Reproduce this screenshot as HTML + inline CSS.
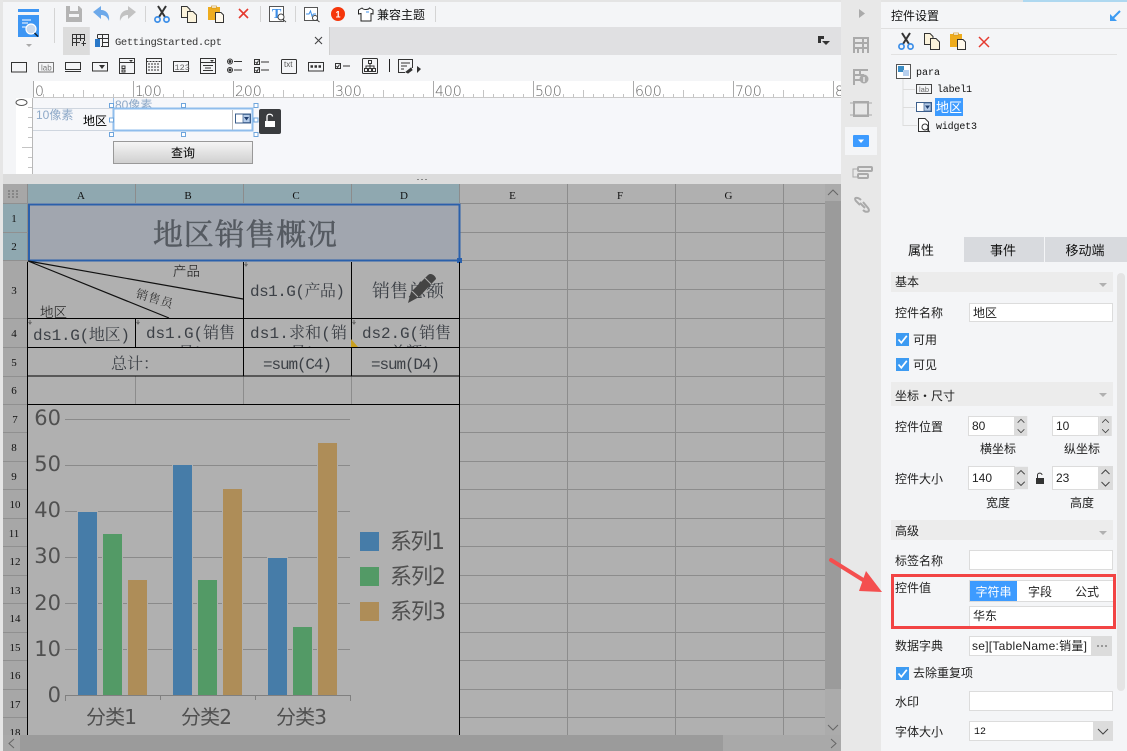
<!DOCTYPE html>
<html><head><meta charset="utf-8"><title>控件设置</title>
<style>
html,body{margin:0;padding:0;width:1127px;height:751px;overflow:hidden;background:#f4f5f7}
svg{display:block}
text{font-family:"Liberation Sans","Noto Sans CJK SC",sans-serif;font-size:12px;fill:#222}
.m{font-family:"Liberation Mono","Noto Serif CJK SC",monospace}
.g{font-family:"Liberation Mono","Noto Serif CJK SC",monospace;font-size:16px;fill:#3c4046}
.h{font-family:"Liberation Serif","Noto Serif CJK SC",serif;font-size:11px;fill:#111;text-anchor:middle}
.c{font-family:"DejaVu Sans","Noto Sans CJK SC",sans-serif;fill:#505050}
.r{font-family:"DejaVu Sans",sans-serif;font-size:14px;fill:#666;font-weight:300}
.p{font-size:12px;fill:#222}
.mid{text-anchor:middle}
</style></head><body>
<svg width="1127" height="751" viewBox="0 0 1127 751" xmlns="http://www.w3.org/2000/svg">
<defs>
<symbol id="sc" viewBox="0 0 16 17" overflow="visible">
 <path d="M4 0 L11 11 M12 0 L5 11" stroke="#333" stroke-width="2" fill="none"/>
 <circle cx="3.5" cy="13.5" r="2.6" fill="none" stroke="#3d8fe8" stroke-width="1.7"/>
 <circle cx="12.5" cy="13.5" r="2.6" fill="none" stroke="#3d8fe8" stroke-width="1.7"/>
</symbol>
<symbol id="cp" viewBox="0 0 16 17" overflow="visible">
 <path d="M.5 .5H6L9 3.5V11.5H.5Z" fill="#fbf3dc" stroke="#333"/>
 <path d="M6.5 5.5H12L15.5 9V16.5H6.5Z" fill="#fbf3dc" stroke="#333"/>
</symbol>
<symbol id="pa" viewBox="0 0 16 17" overflow="visible">
 <rect x="0" y="1" width="12" height="13" fill="#eeac1e"/>
 <rect x="3.5" y="0" width="5" height="2" fill="#fff" stroke="#c98a10" stroke-width=".6"/>
 <path d="M7.5 6.5H13L15.5 9V16.5H7.5Z" fill="#fff9ec" stroke="#333"/>
</symbol>
<symbol id="dd" viewBox="0 0 16 10" overflow="visible">
 <rect x=".5" y=".5" width="15" height="9" fill="#fff" stroke="#3c5f8c"/>
 <rect x="8" y="1" width="7" height="8" fill="#b4cbe8" stroke="#3c5f8c" stroke-width=".7"/>
 <path d="M9 3.5H14L11.5 7Z" fill="#1f3f70"/>
</symbol>
<symbol id="sp" viewBox="0 0 15 24" overflow="visible">
 <rect width="15" height="24" fill="#dcdcdc"/>
 <path d="M3.5 8 L7.5 4 L11.5 8 M3.5 16 L7.5 20 L11.5 16" fill="none" stroke="#444"/>
</symbol>
<symbol id="ck" viewBox="0 0 13 13" overflow="visible">
 <rect width="13" height="13" fill="#3d9bf2"/>
 <path d="M2.5 6.5 L5.3 9.8 L10.8 2.8" fill="none" stroke="#fff" stroke-width="1.7"/>
</symbol>
<pattern id="rt" patternUnits="userSpaceOnUse" x="33" y="81" width="100" height="17">
 <path d="M10.5 13V16M20.5 13V16M30.5 13V16M40.5 13V16M50.5 9V16M60.5 13V16M70.5 13V16M80.5 13V16M90.5 13V16" stroke="#c4c4c4"/>
 <path d="M.5 0V16" stroke="#aaa"/>
</pattern>
<clipPath id="cl4"><rect x="28" y="319" width="432" height="28"/></clipPath>
<clipPath id="clg"><rect x="3" y="184" width="822" height="551"/></clipPath>
<clipPath id="clr"><rect x="33" y="81" width="808" height="17"/></clipPath>
<clipPath id="cl80"><rect x="113" y="97" width="60" height="11"/></clipPath>
<clipPath id="cld"><rect x="970" y="637" width="121" height="18"/></clipPath>
<linearGradient id="btn" x1="0" y1="0" x2="0" y2="1"><stop offset="0" stop-color="#f6f6f6"/><stop offset="1" stop-color="#cfcfcf"/></linearGradient>
</defs>

<!-- base -->
<rect width="1127" height="751" fill="#f4f5f7"/>
<rect width="841" height="2" fill="#e4e4e4"/>
<rect width="3" height="751" fill="#e6e6e6"/>

<!-- top toolbar -->
<g>
 <rect x="18" y="9" width="21" height="3" fill="#3d96f4"/>
 <rect x="18" y="15" width="21" height="22" fill="#3d96f4"/>
 <path d="M22 20H31M22 23H28M22 27H26" stroke="#fff"/>
 <circle cx="31" cy="29" r="5" fill="#c8d8ec" stroke="#fff" stroke-width="1.2"/>
 <path d="M34.5 33 L38 36.5" stroke="#123" stroke-width="1.5"/>
 <path d="M26 44H32L29 47Z" fill="#aaa"/>
 <path d="M54.5 8V43" stroke="#d4d4d4"/>
 <path d="M66 6H79L82 9V22H66Z" fill="#b4b4b4"/>
 <rect x="70" y="6" width="8" height="5" fill="#f4f5f7"/>
 <rect x="69" y="14" width="10" height="3" fill="#f4f5f7"/>
 <path d="M93 12 L101 6 V10 C106 10 110 14 109 21 C107 16 104 15 101 15 V19Z" fill="#6da9ea"/>
 <path d="M136 12 L128 6 V10 C123 10 119 14 120 21 C122 16 125 15 128 15 V19Z" fill="#c2c2c2"/>
 <path d="M145.500 6V22" stroke="#d4d4d4"/>
 <use href="#sc" x="154" y="6" width="16" height="17"/>
 <use href="#cp" x="181" y="6" width="16" height="17"/>
 <use href="#pa" x="208" y="6" width="16" height="17"/>
 <path d="M239 9 L248 18 M248 9 L239 18" stroke="#e53a2f" stroke-width="1.6"/>
 <path d="M260.500 6V22" stroke="#d4d4d4"/>
 <rect x="269.500" y="6.500" width="14" height="15" fill="#fff" stroke="#555"/>
 <text x="272" y="18" style="font-family:'Liberation Serif',serif;font-size:14px;font-weight:bold;fill:#3d8fe8">T</text>
 <circle cx="281" cy="17" r="3" fill="#fff" stroke="#444"/><path d="M283 19.500L286 22" stroke="#444"/>
 <path d="M295.500 6V22" stroke="#d4d4d4"/>
 <rect x="304.500" y="7.500" width="13" height="13" fill="#fff" stroke="#555"/>
 <path d="M306 14H309L310.500 11L312 16L313.500 14H316" stroke="#3d8fe8" fill="none"/>
 <circle cx="315" cy="18" r="2.500" fill="#fff" stroke="#444"/><path d="M317 20L319.500 22" stroke="#444"/>
 <circle cx="338" cy="14" r="7" fill="#f5360b"/>
 <text x="338" y="17.500" class="mid" style="font-size:9px;font-weight:bold;fill:#fff">1</text>
 <path d="M362 8L358.500 10V14L361 13.500V21H371V13.500L373 14V10L369.500 8C368.500 10 363.500 10 362 8Z" fill="#fff" stroke="#222"/>
 <path d="M366 12H369" stroke="#3d8fe8"/>
 <text x="377" y="19" style="font-size:12px;fill:#111">兼容主题</text>
 <path d="M435.500 6V22" stroke="#d4d4d4"/>
</g>

<!-- tab strip -->
<rect x="63" y="27" width="778" height="28" fill="#e0e0e2"/>
<rect x="63" y="27" width="26" height="28" fill="#dcdcdc"/>
<rect x="90" y="27" width="239" height="28" fill="#f4f5f7"/>
<path d="M329.500 27V55" stroke="#cfcfcf"/>
<path d="M72.500 46V34.500H84.500V41M72.500 38.500H84.500M72.500 42.500H80M76.500 34.500V46M80.500 34.500V41M81.500 43.500H86M83.500 41V46" fill="none" stroke="#333"/>
<rect x="95" y="39" width="5" height="8" fill="#2a78c8"/>
<path d="M97.500 34.500H108.500V46.500H101M97.500 34.500V38M97.500 38.500H108.500M102.500 34.500V46.500M102.500 42.500H108.500" fill="none" stroke="#333"/>
<text x="115" y="45" class="m" style="font-size:10.500px;fill:#333" textLength="107">GettingStarted.cpt</text>
<path d="M315 37 L322 44 M322 37 L315 44" stroke="#444" stroke-width="1.1"/>
<path d="M818 36H824V39H821V43H818Z" fill="#333"/><path d="M822 41H830L826 45Z" fill="#333"/>

<!-- widget icons -->
<g fill="none" stroke="#333">
 <rect x="11.500" y="62.500" width="15" height="9.500"/>
 <rect x="38.500" y="62.500" width="15" height="9.500" stroke="#777"/>
 <path d="M65.500 62.500H80.500V69.500H65.500ZM65 71.500H81"/>
 <rect x="92.500" y="62.500" width="15" height="8.500"/><path d="M99 65H105L102 69Z" fill="#333" stroke="none"/>
 <rect x="119.500" y="58.500" width="15" height="15"/><path d="M119.500 62.500H134.500M122 66H125V68.500H122ZM122 70H125V72H122Z"/><path d="M129 60H133L131 62Z" fill="#333" stroke="none"/>
 <rect x="146.500" y="58.500" width="15" height="15"/><path d="M146.500 61.500H161.500M148 64H160M148 67H160M148 70H160" stroke-dasharray="2 1"/>
 <rect x="173.500" y="61.500" width="15" height="10"/>
 <rect x="200.500" y="58.500" width="15" height="15"/><path d="M200.500 62.500H215.500M203 65.500H213M205 68H211M203 70.500H213"/><path d="M210 60H214L212 62Z" fill="#333" stroke="none"/>
 <circle cx="230" cy="61.500" r="2.500"/><circle cx="230" cy="70" r="2.500"/><path d="M234 61.500H242M234 70H242"/>
 <circle cx="230" cy="61.500" r="1" fill="#333"/><circle cx="230" cy="70" r="1" fill="#333"/>
 <rect x="254.500" y="59.500" width="5" height="5"/><rect x="254.500" y="67.500" width="5" height="5"/><path d="M261 62H269M261 70H269M255.500 62L257 63.500L258.500 60.500M255.500 70L257 71.500L258.500 68.500"/>
 <rect x="281.500" y="59.500" width="15" height="14" rx="1"/>
 <rect x="308.500" y="62.500" width="15" height="8.500"/><path d="M310.500 66.500H321.500" stroke-width="2.500" stroke-dasharray="2.500 1.500"/>
 <rect x="335.500" y="63.500" width="5" height="5"/><path d="M336.500 66L337.500 67.500L339.500 64.500M343 66H350"/>
 <rect x="362.500" y="58.500" width="15" height="15" rx="1"/><rect x="368.500" y="60.500" width="3" height="3"/><rect x="364.500" y="68.500" width="3" height="3"/><rect x="368.500" y="68.500" width="3" height="3"/><rect x="372.500" y="68.500" width="3" height="3"/><path d="M370 63.500V68M366 68V66H374V68"/>
 <path d="M389.500 59V72" stroke="#222"/>
 <path d="M405 72.500H398.500V59.500H412.500V68M401 63H410M401 66H407M401 69H404"/><path d="M406 72L411 68L412 70L408 73Z" fill="#333"/>
</g>
<text x="41" y="70.500" style="font-size:8px;fill:#777">lab</text>
<text x="174.500" y="70" class="m" style="font-size:8.500px;fill:#666">123</text>
<text x="284" y="67" style="font-size:8px;fill:#555">txt</text>
<path d="M417 66L421 69L417 73Z" fill="#333"/>

<!-- horizontal ruler -->
<rect x="33" y="81" width="808" height="17" fill="#fff"/>
<rect x="33" y="81" width="808" height="17" fill="url(#rt)"/>
<rect x="33" y="97" width="808" height="1.500" fill="#c9c9c9"/>
<g clip-path="url(#clr)">
 <text x="35" y="96" class="r">0</text><text x="135" y="96" class="r">100</text><text x="235" y="96" class="r">200</text><text x="335" y="96" class="r">300</text><text x="435" y="96" class="r">400</text><text x="535" y="96" class="r">500</text><text x="635" y="96" class="r">600</text><text x="735" y="96" class="r">700</text><text x="835" y="96" class="r">800</text>
</g>

<!-- para area -->
<rect x="33" y="98" width="808" height="76" fill="#f6f7fa"/>
<rect x="16" y="98" width="17" height="76" fill="#fff"/>
<path d="M32.500 98V174" stroke="#b8b8b8"/>
<ellipse cx="21.500" cy="102.500" rx="5.500" ry="3" fill="none" stroke="#555"/>
<path d="M28 117.500H32M28 127.500H32M28 137.500H32M22 147.500H32M28 157.500H32M28 167.500H32M28 107.500H32" stroke="#c4c4c4"/>
<path d="M33 108.500H113M33 130.500H113" stroke="#cfd6df"/>
<path d="M113.500 98V108" stroke="#9fc0e4"/>
<text x="36" y="119" style="font-size:12px;fill:#8ea9c8">10像素</text>
<text x="115" y="109" clip-path="url(#cl80)" style="font-size:12px;fill:#8ea9c8">80像素</text>
<text x="83" y="125" style="font-size:12px;fill:#000">地区</text>
<rect x="113.500" y="108.500" width="139" height="22" fill="#fff" stroke="#8fbdec" stroke-width="2"/>
<path d="M232.500 110V130" stroke="#bbb"/>
<use href="#dd" x="235" y="113.500" width="16" height="10"/>
<g fill="#fff" stroke="#6ea5dc">
 <rect x="109.500" y="103.500" width="4" height="4"/><rect x="181.500" y="103.500" width="4" height="4"/><rect x="254" y="103.500" width="4" height="4"/>
 <rect x="109.500" y="118" width="4" height="4"/><rect x="254" y="118" width="4" height="4"/>
 <rect x="109.500" y="132.500" width="4" height="4"/><rect x="181.500" y="132.500" width="4" height="4"/><rect x="254" y="132.500" width="4" height="4"/>
</g>
<rect x="259" y="109" width="22" height="25" rx="2" fill="#3a3c3f"/>
<rect x="265" y="121" width="10" height="6" fill="#fff"/>
<path d="M267 121V116.500C267 113.500 272.500 113.500 272.500 116.500" fill="none" stroke="#fff" stroke-width="1.300"/>
<rect x="113.500" y="141.500" width="139" height="22" fill="url(#btn)" stroke="#999"/>
<text x="183" y="157" class="mid" style="font-size:12px;fill:#000">查询</text>

<rect x="3" y="174" width="838" height="10" fill="#dcdcdc"/>
<path d="M417 179.500H419M421 179.500H423M425 179.500H427" stroke="#888"/>

<!-- grid -->
<rect x="3" y="184" width="838" height="567" fill="#b0b0b0"/>
<g clip-path="url(#clg)">
 <rect x="3" y="184" width="24" height="551" fill="#a7a7a7"/>
 <rect x="3" y="204" width="24" height="57" fill="#8fa8b0"/>
 <rect x="28" y="184" width="432" height="19" fill="#8fa8b0"/>
 <path d="M460 203.500H825M460 232.500H825M460 260.500H825M460 289.500H825M460 318.500H825M460 347.500H825M460 376.500H825M460 404.500H825M460 432.500H825M460 461.500H825M460 489.500H825M460 518.500H825M460 546.500H825M460 575.500H825M460 603.500H825M460 632.500H825M460 660.500H825M460 689.500H825M460 717.500H825" stroke="#8c8c8c"/>
 <path d="M567.500 184V735M675.500 184V735M783.500 184V735" stroke="#8c8c8c"/>
 <path d="M27.500 184V735M135.500 184V203M243.500 184V203M351.500 184V203M459.500 184V203" stroke="#8c8c8c"/>
 <path d="M3 203.500H28M3 232.500H28M3 260.500H28M3 318.500H28M3 347.500H28M3 376.500H28M3 404.500H28M3 432.500H28M3 461.500H28M3 489.500H28M3 518.500H28M3 546.500H28M3 575.500H28M3 603.500H28M3 632.500H28M3 660.500H28M3 689.500H28M3 717.500H28" stroke="#909090"/>
 <path d="M135.500 376V404M243.500 376V404M351.500 376V404" stroke="#8c8c8c"/>
 <path d="M8 191H18M8 194H18M8 197H18" stroke="#666" stroke-dasharray="2 2"/>
 <text x="81" y="199" class="h">A</text><text x="188" y="199" class="h">B</text><text x="296" y="199" class="h">C</text><text x="404" y="199" class="h">D</text><text x="512.500" y="199" class="h">E</text><text x="620" y="199" class="h">F</text><text x="728.500" y="199" class="h">G</text>
 <text x="14" y="222" class="h">1</text><text x="14" y="250" class="h">2</text><text x="14" y="294" class="h">3</text><text x="14" y="337" class="h">4</text><text x="14" y="366" class="h">5</text><text x="14" y="394" class="h">6</text>
 <text x="15" y="423" class="h">7</text><text x="14" y="451" class="h">8</text><text x="14" y="480" class="h">9</text><text x="15" y="508" class="h">10</text><text x="14" y="537" class="h">11</text><text x="15" y="565" class="h">12</text><text x="15" y="594" class="h">13</text><text x="15" y="622" class="h">14</text><text x="15" y="651" class="h">15</text><text x="15" y="679" class="h">16</text><text x="15" y="708" class="h">17</text><text x="15" y="736" class="h">18</text>
 <!-- selected title -->
 <rect x="29" y="204.500" width="430.500" height="56" fill="#a1a6af" stroke="#2a60ab" stroke-width="2"/>
 <rect x="457" y="258" width="5" height="5" fill="#2a60ab"/>
 <text x="153" y="245" textLength="184" style="font-family:'Liberation Serif','Noto Serif CJK SC',serif;font-size:30px;fill:#555a61;stroke:#555a61;stroke-width:.5px">地区销售概况</text>
 <!-- table lines -->
 <path d="M243.500 262V376M351.500 262V376M459.500 262V735M27.500 262V735M135.500 319V347M27.500 318.500H460M27.500 347.500H460M27.500 376H460M27.500 404.500H460" stroke="#000"/>
 <path d="M28 261L243 299M28 261L169 318" stroke="#111" stroke-width="1.200"/>
 <text x="173" y="276" style="font-size:13.500px;font-weight:300;fill:#111">产品</text>
 <text x="40" y="317" style="font-size:13.500px;font-weight:300;fill:#111">地区</text>
 <text x="0" y="0" transform="translate(135,297) rotate(17)" style="font-family:'Liberation Serif','Noto Serif CJK SC',serif;font-size:12px;fill:#333;letter-spacing:1px">销售员</text>
 <text x="250" y="296" class="g" textLength="95">ds1.G(产品)</text>
 <text x="372" y="297" style="font-family:'Liberation Serif','Noto Serif CJK SC',serif;font-size:18px;fill:#3c4046">销售总额</text>
 <path d="M408 303L411 292L428 275C431 272 436 276 436 279L419 297Z" fill="#444"/>
 <path d="M412 291L418 297M425 278L431 284" stroke="#b0b0b0"/>
 <g clip-path="url(#cl4)">
  <text x="33" y="340" class="g" textLength="97">ds1.G(地区)</text>
  <text x="146" y="338" class="g" textLength="89">ds1.G(销售</text>
  <text x="250" y="338" class="g" textLength="97">ds1.求和(销</text>
  <text x="362" y="338" class="g" textLength="89">ds2.G(销售</text>
  <text x="178" y="358" class="g">员)</text><text x="290" y="358" class="g">员)</text><text x="390" y="358" class="g">总额)</text>
 </g>
 <path d="M351 339L358 347H351Z" fill="#c9a020"/>
 <path d="M246 262V266M244.500 264L246 266L247.500 264M30 320V324M28.500 322L30 324L31.500 322M138 320V324M136.500 322L138 324L139.500 322M354 320V324M352.500 322L354 324L355.500 322" stroke="#666" fill="none"/>
 <text x="111" y="369" style="font-family:'Liberation Serif','Noto Serif CJK SC',serif;font-size:16px;fill:#3c4046">总计：</text>
 <text x="263" y="369" class="g" textLength="69">=sum(C4)</text>
 <text x="371" y="369" class="g" textLength="69">=sum(D4)</text>
 <!-- chart -->
 <rect x="28" y="405" width="431" height="330" fill="#b0b0b0"/>
 <path d="M65 419.500H350M65 465.500H350M65 511.500H350M65 557.500H350M65 603.500H350M65 649.500H350" stroke="#8a8a8a"/>
 <path d="M65.500 701V695.500H350.500V701M160.500 695V700M255.500 695V700" stroke="#808080" fill="none"/>
 <g fill="#b0b0b0">
  <rect x="77" y="511" width="21" height="184"/><rect x="102" y="534" width="21" height="161"/><rect x="127" y="579" width="21" height="116"/>
  <rect x="172" y="464" width="21" height="231"/><rect x="197" y="579" width="21" height="116"/><rect x="222" y="488" width="21" height="207"/>
  <rect x="267" y="557" width="21" height="138"/><rect x="292" y="626" width="21" height="69"/><rect x="317" y="442" width="21" height="253"/>
 </g>
 <g fill="#467ca8"><rect x="78" y="512" width="19" height="183"/><rect x="173" y="465" width="19" height="230"/><rect x="268" y="558" width="19" height="137"/></g>
 <g fill="#539a66"><rect x="103" y="534" width="19" height="161"/><rect x="198" y="580" width="19" height="115"/><rect x="293" y="627" width="19" height="68"/></g>
 <g fill="#ae8d58"><rect x="128" y="580" width="19" height="115"/><rect x="223" y="489" width="19" height="206"/><rect x="318" y="443" width="19" height="252"/></g>
 <g text-anchor="end">
  <text x="61" y="425" class="c" style="font-size:21px">60</text><text x="61" y="471" class="c" style="font-size:21px">50</text><text x="61" y="517" class="c" style="font-size:21px">40</text><text x="61" y="563" class="c" style="font-size:21px">30</text><text x="61" y="610" class="c" style="font-size:21px">20</text><text x="61" y="656" class="c" style="font-size:21px">10</text><text x="61" y="702" class="c" style="font-size:21px">0</text>
 </g>
 <text x="86" y="724" class="c" style="font-size:20px" textLength="51">分类1</text>
 <text x="181" y="724" class="c" style="font-size:20px" textLength="51">分类2</text>
 <text x="276" y="724" class="c" style="font-size:20px" textLength="51">分类3</text>
 <rect x="360" y="532" width="19" height="19" fill="#467ca8"/><rect x="360" y="567" width="19" height="19" fill="#539a66"/><rect x="360" y="602" width="19" height="19" fill="#ae8d58"/>
 <text x="390" y="549" class="c" style="font-size:22px" textLength="55">系列1</text>
 <text x="390" y="584" class="c" style="font-size:22px" textLength="56">系列2</text>
 <text x="390" y="619" class="c" style="font-size:22px" textLength="56">系列3</text>
 <path d="M27.500 404V735M459.500 404V735" stroke="#000"/>
</g>

<!-- scrollbars -->
<rect x="825" y="184" width="16" height="551" fill="#ababab"/>
<rect x="825" y="201" width="16" height="488" fill="#9b9b9b"/>
<path d="M828 195L833 190L838 195" fill="none" stroke="#666"/>
<path d="M828 725L833 730L838 725" fill="none" stroke="#666"/>
<rect x="3" y="735" width="838" height="16" fill="#a9a9a9"/>
<rect x="20" y="735" width="703" height="16" fill="#9b9b9b"/>
<path d="M14 739L9 743.500L14 748M831 739L836 743.500L831 748" fill="none" stroke="#666"/>

<!-- side strip -->
<rect x="841" y="0" width="40" height="751" fill="#e8e8e8"/>
<path d="M859 9L865 13.500L859 18Z" fill="#aaa"/>
<g fill="none" stroke="#aaa" stroke-width="2">
 <path d="M854 53V38H868V48H854M858 48V53M863 48V53M868 38V53M863 38V48M868 43H854"/>
 <path d="M854 85V70H868M854 75H864M854 80H860M860 70V76"/>
 <rect x="854" y="102" width="14" height="14"/>
 <path d="M850 103H872M850 115H872" stroke-width="1"/>
 <path d="M857 169H853V177H857" stroke-width="1"/>
 <rect x="858" y="167" width="14" height="4" rx="1"/><rect x="858" y="174" width="10" height="4" rx="1"/>
 <path d="M860 205L856 201C853 197 858 197 861 200M863 202L868 208C871 212 866 213 863 210M860 203L865 208"/>
</g>
<circle cx="864" cy="79" r="4.500" fill="#aaa"/><path d="M864 77V82" stroke="#e8e8e8" stroke-width="1.500"/>
<rect x="845" y="127" width="32" height="28" fill="#f4f5f7"/>
<rect x="853" y="135" width="16" height="12" rx="1" fill="#3d9bff"/>
<path d="M858 139.500H864L861 143Z" fill="#fff"/>

<!-- right panel -->
<rect x="881" y="0" width="246" height="237" fill="#f4f5f7"/>
<rect x="1023" y="0" width="104" height="2" fill="#aed8f0"/>
<rect x="881" y="0" width="142" height="2" fill="#e4e4e4"/>
<text x="891" y="20" style="font-size:12px;fill:#111">控件设置</text>
<path d="M1120 11L1112 19" stroke="#3d9bf2" stroke-width="2"/><path d="M1110 14V21H1117Z" fill="#3d9bf2"/>
<path d="M881 28.500H1127" stroke="#dfdfdf"/>
<use href="#sc" x="898" y="33" width="16" height="17"/>
<use href="#cp" x="924" y="33" width="16" height="17"/>
<use href="#pa" x="950" y="33" width="16" height="17"/>
<path d="M979 37L989 47M989 37L979 47" stroke="#e53a2f" stroke-width="1.500"/>
<path d="M891 54.500H1117" stroke="#e2e2e2"/>
<rect x="896.500" y="64.500" width="14" height="14" fill="#fff" stroke="#555"/>
<rect x="898" y="66" width="6" height="6" fill="#3a8cc4"/><rect x="903" y="70" width="6" height="6" fill="#b8d0ee"/>
<text x="916" y="75" class="m" style="font-size:10px;fill:#111">para</text>
<path d="M903 79V125.500H917M903.500 89.500H915M903.500 107.500H915" fill="none" stroke="#ddd"/>
<rect x="916.500" y="84.500" width="15" height="9" fill="#f4f5f7" stroke="#444"/>
<text x="919" y="92" style="font-size:7.500px;fill:#666">lab</text>
<text x="937" y="92" class="m" style="font-size:10px;fill:#111" textLength="35">label1</text>
<use href="#dd" x="916" y="102" width="16" height="10"/>
<rect x="935" y="98" width="28" height="18" fill="#3d9bff"/>
<text x="936" y="112" style="font-size:13px;fill:#fff">地区</text>
<path d="M918.500 118.500H925L928.500 122V131.500H918.500Z" fill="#fff" stroke="#333"/>
<circle cx="925" cy="127" r="3" fill="#fff" stroke="#333"/><path d="M927 129.500L930 132" stroke="#333"/>
<text x="936" y="129" class="m" style="font-size:10px;fill:#111" textLength="41">widget3</text>

<!-- tabs -->
<rect x="964" y="237" width="80" height="25" fill="#d8dade"/>
<rect x="1045" y="237" width="82" height="25" fill="#d8dade"/>
<text x="921" y="255" class="mid" style="font-size:13px;fill:#111">属性</text>
<text x="1003" y="255" class="mid" style="font-size:13px;fill:#111">事件</text>
<text x="1085" y="255" class="mid" style="font-size:13px;fill:#111">移动端</text>

<!-- properties -->
<rect x="1117" y="273" width="8" height="418" rx="4" fill="#e4e4e4"/>
<rect x="891" y="272" width="222" height="20" fill="#ececec"/>
<text x="895" y="286" class="p">基本</text><path d="M1099 283H1107L1103 287Z" fill="#b0b0b0"/>
<text x="895" y="317" class="p">控件名称</text>
<rect x="969.500" y="303.500" width="143" height="18" fill="#fff" stroke="#dcdcdc"/>
<text x="973" y="317" class="p">地区</text>
<use href="#ck" x="896" y="333" width="13" height="13"/><text x="913" y="344" class="p">可用</text>
<use href="#ck" x="896" y="358" width="13" height="13"/><text x="913" y="369" class="p">可见</text>
<rect x="891" y="382" width="222" height="24" fill="#ececec"/>
<text x="895" y="400" class="p">坐标・尺寸</text><path d="M1099 393H1107L1103 397Z" fill="#b0b0b0"/>
<text x="895" y="431" class="p">控件位置</text>
<rect x="968.500" y="416.500" width="46" height="19" fill="#fff" stroke="#dcdcdc"/>
<use href="#sp" x="1014" y="416" width="14" height="20"/>
<text x="972" y="430" class="p">80</text>
<rect x="1052.500" y="416.500" width="46" height="19" fill="#fff" stroke="#dcdcdc"/>
<use href="#sp" x="1098" y="416" width="15" height="20"/>
<text x="1056" y="430" class="p">10</text>
<text x="998" y="453" class="p mid">横坐标</text><text x="1082" y="453" class="p mid">纵坐标</text>
<text x="895" y="483" class="p">控件大小</text>
<rect x="968.500" y="466.500" width="46" height="23" fill="#fff" stroke="#dcdcdc"/>
<use href="#sp" x="1014" y="466" width="14" height="24"/>
<text x="972" y="482" class="p">140</text>
<rect x="1036" y="478" width="8" height="6" fill="#333"/>
<path d="M1037.500 478V475C1037.500 472.500 1042 472.500 1042 475" fill="none" stroke="#333"/>
<rect x="1052.500" y="466.500" width="46" height="23" fill="#fff" stroke="#dcdcdc"/>
<use href="#sp" x="1098" y="466" width="15" height="24"/>
<text x="1056" y="482" class="p">23</text>
<text x="998" y="507" class="p mid">宽度</text><text x="1082" y="507" class="p mid">高度</text>
<rect x="891" y="520" width="222" height="20" fill="#ececec"/>
<text x="895" y="535" class="p">高级</text><path d="M1099 531H1107L1103 535Z" fill="#b0b0b0"/>
<text x="895" y="565" class="p">标签名称</text>
<rect x="969.500" y="550.500" width="143" height="19" fill="#fff" stroke="#dcdcdc"/>
<!-- control value -->
<text x="895" y="592" class="p">控件值</text>
<rect x="969.500" y="580.500" width="145" height="21" fill="#fff" stroke="#dcdcdc"/>
<rect x="970" y="581" width="47" height="20" fill="#3d9bff"/>
<text x="993.500" y="596" class="mid" style="font-size:12px;fill:#fff">字符串</text>
<text x="1040" y="596" class="p mid">字段</text>
<text x="1087" y="596" class="p mid">公式</text>
<rect x="969.500" y="606.500" width="145" height="20" fill="#fff" stroke="#dcdcdc"/>
<text x="973" y="620" class="p">华东</text>
<rect x="892.500" y="575.500" width="222" height="52" fill="none" stroke="#f24444" stroke-width="3"/>
<text x="895" y="650" class="p">数据字典</text>
<rect x="969.500" y="636.500" width="122" height="19" fill="#fff" stroke="#dcdcdc"/>
<text x="972" y="650" clip-path="url(#cld)" class="p" textLength="115">se][TableName:销量]</text>
<rect x="1091" y="636" width="21" height="20" fill="#dcdcdc"/>
<path d="M1097 646H1107" stroke="#555" stroke-dasharray="2 2"/>
<use href="#ck" x="896" y="667" width="13" height="13"/><text x="913" y="677" class="p">去除重复项</text>
<text x="895" y="706" class="p">水印</text>
<rect x="969.500" y="691.500" width="143" height="19" fill="#fff" stroke="#dcdcdc"/>
<text x="895" y="736" class="p">字体大小</text>
<rect x="969.500" y="721.500" width="143" height="19" fill="#fff" stroke="#dcdcdc"/>
<text x="974" y="734" class="m" style="font-size:10px;fill:#111">12</text>
<rect x="1093" y="721" width="20" height="20" fill="#dcdcdc"/>
<path d="M1098 729L1103 734L1108 729" fill="none" stroke="#444"/>

<!-- red arrow -->
<path d="M831 560L868 583" stroke="#f44f4f" stroke-width="4" stroke-linecap="round"/>
<path d="M882 592L866 571L859 591Z" fill="#f44f4f"/>
</svg>
</body></html>
